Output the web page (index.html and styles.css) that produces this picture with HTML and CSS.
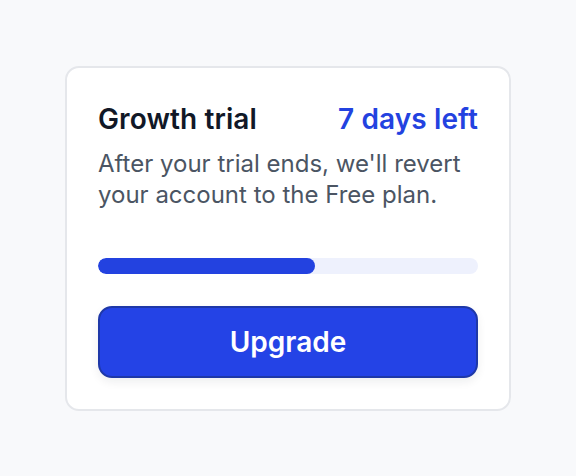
FILE: index.html
```html
<!DOCTYPE html>
<html lang="en">
<head>
    <meta charset="UTF-8">
    <meta name="viewport" content="width=device-width, initial-scale=1.0">
    <title>Trial status</title>
    <link rel="stylesheet" href="styles.css">
</head>
<body>
    <div class="card">
        <div class="header">
            <h2 class="plan">Growth trial</h2>
            <span class="days">7 days left</span>
        </div>
        <p class="note">After your trial ends, we'll revert your account to the Free plan.</p>

        <div class="progress">
            <div class="progress-fill" style="width: 57%"></div>
        </div>

        <button class="upgrade">Upgrade</button>
    </div>
</body>
</html>
```

FILE: styles.css
```css
html, body {
    height: 100%;
}
body {
    margin: 0;
    font-family: Inter, "Noto Sans", sans-serif;
    background-color: #f8f9fb;
    display: flex;
    align-items: center;
    justify-content: center;
}
.card {
    box-sizing: border-box;
    width: 446px;
    padding: 31px;
    background-color: white;
    border: 2px solid #e5e7eb;
    border-radius: 14px;
}
.header {
    display: flex;
    justify-content: space-between;
    align-items: baseline;
}
.plan {
    margin: 0;
    font-size: 28px;
    line-height: 40px;
    font-weight: 600;
    letter-spacing: 0.1px;
    color: #111827;
}
.days {
    font-size: 28px;
    line-height: 40px;
    font-weight: 600;
    letter-spacing: 0.1px;
    color: #2342e0;
}
.note {
    margin: 9px 0 0;
    font-size: 24px;
    line-height: 31px;
    color: #4b5563;
}
.progress {
    margin-top: 48px;
    height: 16px;
    border-radius: 8px;
    background-color: #eef1fd;
    overflow: hidden;
}
.progress-fill {
    height: 100%;
    border-radius: 8px;
    background-color: #2342e0;
}
.upgrade {
    display: block;
    width: 100%;
    height: 72px;
    margin-top: 32px;
    font-family: inherit;
    font-size: 28px;
    font-weight: 600;
    color: white;
    background-color: #2443e6;
    border: 2px solid #1e38a8;
    border-radius: 14px;
    box-shadow: 0 4px 10px rgba(17, 24, 39, 0.07);
    cursor: pointer;
}
```
